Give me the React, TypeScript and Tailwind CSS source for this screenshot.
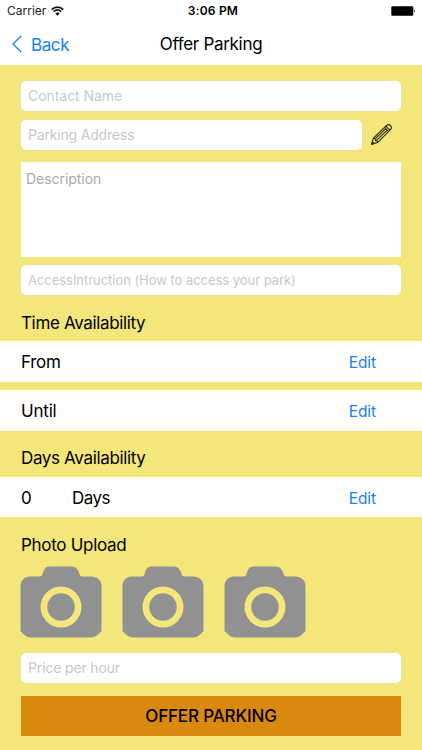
import React from "react";

type FieldProps = { label: string; textClass: string; className?: string };

function Field({ label, textClass, className = "" }: FieldProps) {
  return (
    <div
      className={`flex items-center rounded-[5px] bg-white pl-[7px] text-[#c7c7cd] whitespace-nowrap shadow-[0_0_0_0.5px_#dfdcb8] ${className}`}
    >
      <span className={textClass}>{label}</span>
    </div>
  );
}

function Row({ children, className = "" }: { children: React.ReactNode; className?: string }) {
  return (
    <div className={`flex items-center bg-white pl-[21px] pr-[46px] text-[17px] ${className}`}>
      {children}
      <button className="ml-auto text-[15.5px] leading-5 tracking-[-0.1px] text-[#1680fa]">Edit</button>
    </div>
  );
}

function Camera() {
  return (
    <svg width="82" height="72" viewBox="0 0 82 72" fill="#919191">
      <path
        fillRule="evenodd"
        d="M10 10.5H19C22 10.5 22.2 9 23 6.5C24.3 2.5 26 .5 30 .5H51C55.500 .5 57.500 2.500 59 6.500C60 9.500 60.200 10.500 63 10.500H71C77.500 10.500 81.500 14.500 81.500 20V65L78 68.500C75.500 70.700 73.500 71.500 71 71.500H11C8.500 71.500 6.500 70.700 4 68.500L.5 65V20C.5 14.500 4.500 10.500 10 10.500ZM41 20.500A20.500 20.500 0 1 0 41 61.500A20.500 20.500 0 1 0 41 20.500Z"
      />
      <circle cx="41" cy="41" r="13.700" />
    </svg>
  );
}

function Pencil() {
  return (
    <svg width="21" height="21" viewBox="0 0 22 22" fill="none" stroke="#29260e" strokeWidth="1.100" strokeLinejoin="round">
      <path d="M.8 21.200L2.300 15L16.300 1.500C17.800 .2 19.500 .7 20.600 1.900C21.600 3.100 21.600 4.700 20.300 6L7 19.400Z" />
      <path d="M2.300 15L4.300 15.500L4.800 17.500L6.800 18L7 19.400M14.200 3.600L18.300 7.800M15.600 2.300L19.700 6.500M4.300 15.500L15.300 4.800M5.700 17.200L17 6.300" />
      <path d="M.8 21.200L1.400 18.800L3.200 20.500Z" fill="#29260e" />
    </svg>
  );
}

export default function App() {
  return (
    <main className="flex h-[750px] w-[422px] flex-col overflow-hidden bg-[#f3e67a] font-[Inter,'Liberation_Sans',sans-serif] text-black">
      <header className="h-[65px] shrink-0 bg-white">
        <div className="grid h-[22px] grid-cols-3 items-center pl-[7px] pr-[6px]">
          <div className="flex items-center gap-[5px]">
            <span className="text-[12px] leading-4 text-[#222]">Carrier</span>
            <svg width="13" height="10" viewBox="0 0 13 10" fill="none" stroke="#111" strokeWidth="1.700">
              <path d="M.7 3.600C4.100 .3 8.900 .3 12.300 3.600M2.700 5.700C5 3.600 8 3.600 10.300 5.700" />
              <path d="M4.300 7.500C5.600 6.300 7.400 6.300 8.700 7.500L6.500 9.700Z" fill="#111" stroke="none" />
            </svg>
          </div>
          <span className="pl-[3px] text-center text-[12px] leading-4 font-semibold tracking-[0.2px]">3:06 PM</span>
          <svg className="ml-auto" width="25" height="10" viewBox="0 0 25 10">
            <rect x=".3" y=".3" width="22" height="9.400" rx="1.200" />
            <path d="M23.200 3.300Q24.800 5 23.200 6.700Z" />
          </svg>
        </div>
        <div className="grid h-[43px] grid-cols-3 items-center pl-[12px] pr-[12px]">
          <button className="flex items-center gap-[9px] pt-px text-[#1680fa]">
            <svg width="10" height="18" viewBox="0 0 10 18" fill="none" stroke="currentColor" strokeWidth="1.300">
              <path d="M9.300 .7L1 9L9.300 17.300" />
            </svg>
            <span className="pt-[2px] text-[17px] leading-5 tracking-[-0.400px]">Back</span>
          </button>
          <h1 className="text-center text-[17px] leading-5 tracking-[-0.300px] whitespace-nowrap">Offer Parking</h1>
        </div>
      </header>

      <section className="mt-[16px] flex flex-col px-[21px]">
        <Field className="h-[30px]" label="Contact Name" textClass="text-[14px] leading-5 tracking-[-0.050px] pb-px" />
        <div className="mt-[9px] flex items-center">
          <Field className="h-[30px] w-[341px]" label="Parking Address" textClass="text-[14px] leading-5 tracking-[-0.180px] pb-px" />
          <div className="ml-[9px] pb-px"><Pencil /></div>
        </div>
        <div className="mt-[12px] h-[95px] bg-white px-[5px] pt-[7px] text-[14px] leading-5 tracking-[-0.050px] text-[#aaa]">Description</div>
        <Field className="mt-[8px] h-[30px]" label="AccessIntruction (How to access your park)" textClass="pb-px text-[13px] leading-5 tracking-[-0.040px]" />
      </section>

      <h2 className="mt-[17px] ml-[21px] h-[22px] text-[17px] leading-[22px] tracking-[-0.350px]">Time Availability</h2>
      <Row className="mt-[7px] h-[41px] pt-[3px]"><span className="tracking-[-0.300px]">From</span></Row>
      <Row className="mt-[8px] h-[41px] pt-[2px]"><span className="tracking-[-0.200px]">Until</span></Row>
      <h2 className="mt-[16px] ml-[21px] h-[22px] text-[17px] leading-[22px] tracking-[-0.350px]">Days Availability</h2>
      <Row className="mt-[8px] h-[40px] pt-[3px]">
        <span className="w-[51px]">0</span>
        <span className="tracking-[-0.500px]">Days</span>
      </Row>
      <h2 className="mt-[17px] ml-[21px] h-[22px] text-[17px] leading-[22px] tracking-[-0.300px]">Photo Upload</h2>
      <div className="mt-[10px] ml-[20px] flex h-[72px] gap-[20px]"><Camera /><Camera /><Camera /></div>
      <Field className="mt-[15px] mr-[21px] ml-[21px] h-[30px]" label="Price per hour" textClass="text-[14px] leading-5 tracking-[-0.150px]" />
      <button className="mt-[13px] mr-[21px] ml-[21px] h-[40px] bg-[#da890f] pt-[2px] text-[17px] font-medium tracking-[-0.150px]">OFFER PARKING</button>
    </main>
  );
}
